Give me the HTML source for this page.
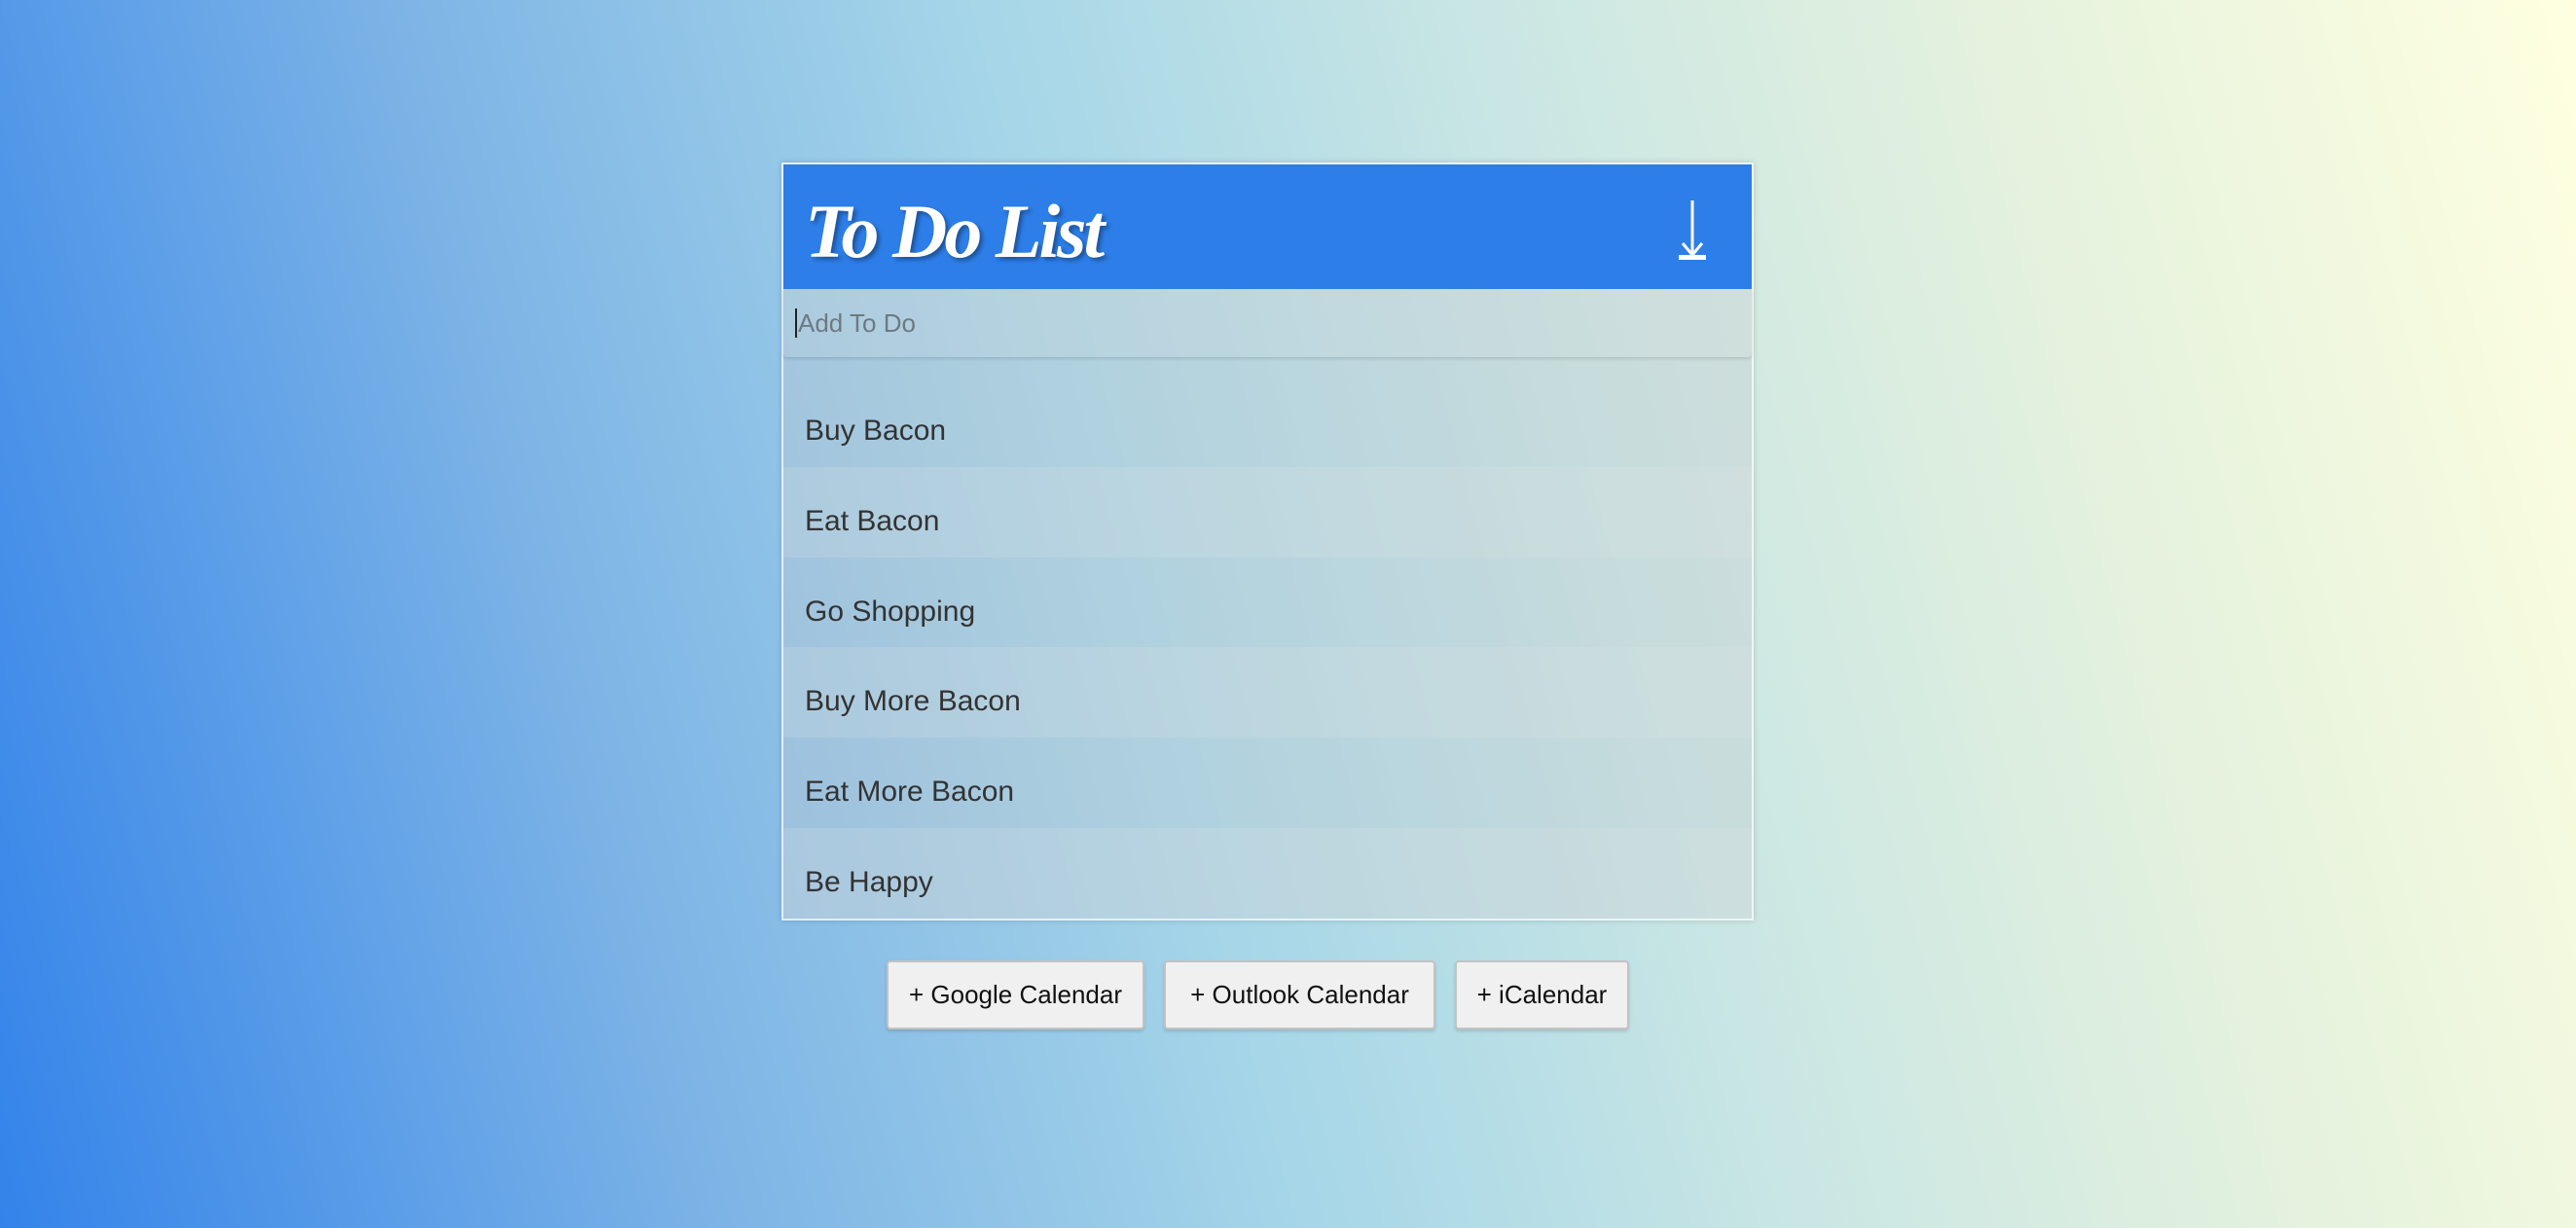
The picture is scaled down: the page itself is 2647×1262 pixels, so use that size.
<!DOCTYPE html>
<html><head><meta charset="utf-8"><style>
html,body{margin:0;padding:0;width:2647px;height:1262px;overflow:hidden}
body{background:linear-gradient(75deg,#3383ea 0%,#7db4e6 25%,#a6d6e8 45%,#c9e6e4 62%,#e5f2de 80%,#ffffe0 100%);font-family:"Liberation Sans",sans-serif;position:relative}
.card{position:absolute;left:803px;top:167px;width:995px;height:775px;border:2px solid rgba(255,255,255,.7);background:rgba(195,200,205,.35);box-shadow:0 0 6px rgba(0,0,0,.15)}
.head{position:absolute;left:0;top:0;right:0;height:128px;background:#2d7ee8}
.title{position:absolute;left:22px;top:24px;font-family:"Liberation Serif",serif;font-style:italic;font-weight:bold;font-size:78px;color:#fff;text-shadow:3px 3px 4px rgba(0,0,0,.35);letter-spacing:-3px}
.arrow{position:absolute;left:914px;top:35px}
.input{position:absolute;left:0;right:0;top:128px;height:70px;background:rgba(220,225,228,.15);box-shadow:0 2px 3px rgba(0,0,0,.12);border-radius:0 0 4px 4px}
.input span{position:absolute;left:12px;top:20px;font-size:26px;color:#6d7a82;border-left:2px solid #222;padding-left:1px;line-height:30px}
.row{position:absolute;left:0;right:0;height:93px;font-size:30px;color:#333}
.row span{position:absolute;left:22px;bottom:20px}
.odd{background:rgba(225,228,232,.2)}
.btn{position:absolute;top:987px;height:71px;background:#f0f0f0;border:2px solid #c3c3c3;border-radius:4px;box-sizing:border-box;font-size:26px;color:#111;text-align:center;line-height:67px;box-shadow:0 2px 3px rgba(0,0,0,.15)}
</style></head><body>
<div class="card">
<div class="head"><div class="title">To Do List</div>
<svg class="arrow" width="40" height="66" viewBox="0 0 40 66"><line x1="20" y1="2" x2="20" y2="58" stroke="#fff" stroke-width="3"/><polyline points="10,46 20,58 30,46" fill="none" stroke="#fff" stroke-width="3"/><rect x="6" y="58" width="28" height="5" fill="#fff"/></svg></div>
<div class="input"><span>Add To Do</span></div>
<div class="row" style="top:218px"><span>Buy Bacon</span></div>
<div class="row odd" style="top:311px"><span>Eat Bacon</span></div>
<div class="row" style="top:404px"><span>Go Shopping</span></div>
<div class="row odd" style="top:496px"><span>Buy More Bacon</span></div>
<div class="row" style="top:589px"><span>Eat More Bacon</span></div>
<div class="row odd" style="top:682px"><span>Be Happy</span></div>
</div>
<div class="btn" style="left:911px;width:265px">+ Google Calendar</div>
<div class="btn" style="left:1196px;width:279px">+ Outlook Calendar</div>
<div class="btn" style="left:1495px;width:179px">+ iCalendar</div>
</body></html>
